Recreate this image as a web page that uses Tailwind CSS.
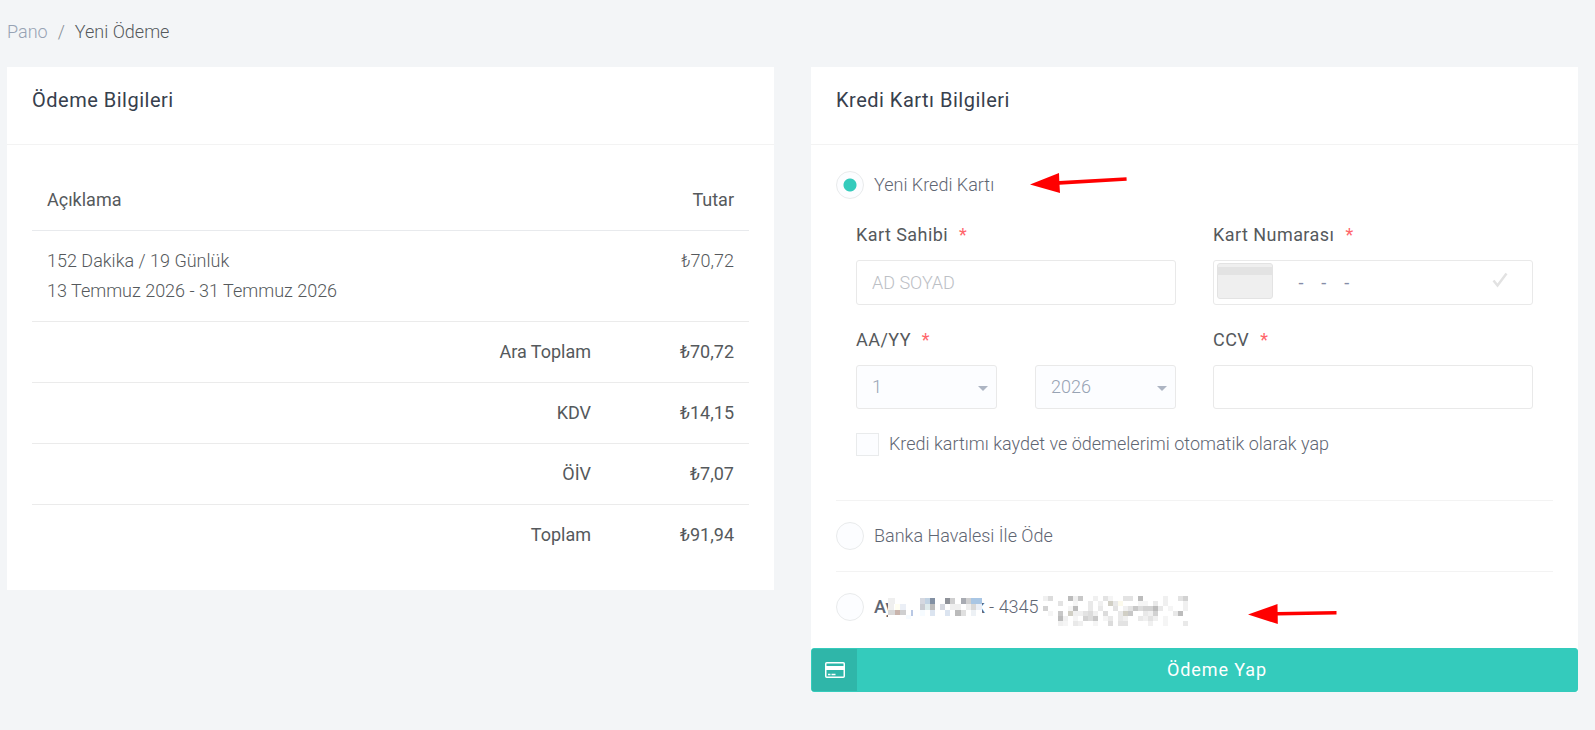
<!DOCTYPE html>
<html lang="tr">
<head>
<meta charset="utf-8">
<meta name="viewport" content="width=device-width, initial-scale=1">
<title>Yeni Ödeme</title>
<script src="https://cdn.jsdelivr.net/npm/@tailwindcss/browser@4"></script>
</head>
<body class="min-h-screen bg-[#f3f5f7] font-['Roboto',sans-serif] text-[18px] leading-[30px] font-light text-[#55595c]">
<nav aria-label="Konum" class="pt-[17px] pl-[7px]">
  <ol class="flex gap-2.5">
    <li><a href="#" class="text-[#97a3b4]">Pano</a></li>
    <li aria-hidden="true" class="text-[#868e96]">/</li>
    <li aria-current="page">Yeni Ödeme</li>
  </ol>
</nav>

<main class="grid grid-cols-2 items-start gap-[37px] pt-5 pr-[17px] pb-8 pl-[7px]">
  <section class="bg-white">
    <header class="border-b border-[#f3f3f3] px-[25px] pt-[18px] pb-[29px]">
      <h1 class="text-[20px] font-normal tracking-wide text-[#37404d]">Ödeme Bilgileri</h1>
    </header>
    <div class="p-[25px]">
      <table class="w-full border-collapse">
        <thead>
          <tr>
            <th colspan="2" class="p-[15px] text-left font-normal">Açıklama</th>
            <th class="p-[15px] text-right font-normal">Tutar</th>
          </tr>
        </thead>
        <tbody>
          <tr class="border-t border-[#e8eaed]">
            <td colspan="2" class="p-[15px]">152 Dakika / 19 Günlük<br>13 Temmuz 2026 - 31 Temmuz 2026</td>
            <td class="p-[15px] text-right align-top">₺70,72</td>
          </tr>
          <tr class="border-t border-[#ebebeb] text-right">
            <th colspan="2" class="p-[15px] font-normal">Ara Toplam</th>
            <td class="w-[143px] p-[15px] font-normal">₺70,72</td>
          </tr>
          <tr class="border-t border-[#ebebeb] text-right">
            <th colspan="2" class="p-[15px] font-normal">KDV</th>
            <td class="p-[15px] font-normal">₺14,15</td>
          </tr>
          <tr class="border-t border-[#ebebeb] text-right">
            <th colspan="2" class="p-[15px] font-normal">ÖİV</th>
            <td class="p-[15px] font-normal">₺7,07</td>
          </tr>
          <tr class="border-t border-[#ebebeb] text-right">
            <th colspan="2" class="p-[15px] font-normal">Toplam</th>
            <td class="p-[15px] font-normal">₺91,94</td>
          </tr>
        </tbody>
      </table>
    </div>
  </section>

  <form class="bg-white">
    <header class="border-b border-[#f3f3f3] px-[25px] pt-[18px] pb-[29px]">
      <h2 class="text-[20px] font-normal tracking-wide text-[#37404d]">Kredi Kartı Bilgileri</h2>
    </header>

    <div class="px-[25px] pt-[25px] pb-1.5">
      <div class="relative flex items-center text-[#5f6673]">
        <input id="pay-new" name="pay" type="radio" checked class="size-7 shrink-0 appearance-none rounded-full border border-[#e9ebec] bg-[#fcfdff] checked:bg-[radial-gradient(circle,#34cbbc_6px,#fcfdff_7px)]">
        <label for="pay-new" class="pl-2.5">Yeni Kredi Kartı</label>
        <svg aria-hidden="true" class="absolute top-0 left-[194px] h-6 w-[98px]" viewBox="0 0 98 24" fill="#f00"><path d="M0 14.5 29 3l.3 8L96.500 7.200l.2 3.500L29.500 14.700 30 23z"/></svg>
      </div>

      <div class="grid grid-cols-2 gap-x-[37px] gap-y-5 px-5 pt-5">
        <div>
          <label for="holder" class="mb-2.5 block font-normal tracking-wide">Kart Sahibi <span class="pl-1.5 text-[#ff666b]">*</span></label>
          <input id="holder" type="text" placeholder="AD SOYAD" class="block h-[45px] w-full rounded-[3px] border border-[#e9e9e9] bg-white px-[15px] placeholder:text-[#bcc0c5]">
        </div>
        <div>
          <label for="number" class="mb-2.5 block font-normal tracking-wide">Kart Numarası <span class="pl-1.5 text-[#ff666b]">*</span></label>
          <div class="flex h-[45px] items-center rounded-[3px] border border-[#e9e9e9] bg-white pr-6 pl-[3px]">
            <svg aria-hidden="true" class="-mt-1 h-9 w-14 shrink-0" viewBox="0 0 56 36"><rect x=".5" y=".5" width="55" height="35" rx="2.500" fill="#efefef" stroke="#e3e3e3"/><path d="M0 4h56v8H0z" fill="#e3e3e3"/></svg>
            <input id="number" type="text" inputmode="numeric" placeholder=" -    -    - " class="min-w-0 flex-1 bg-transparent pl-[21px] font-normal whitespace-pre placeholder:text-[#868ca8]">
            <svg aria-hidden="true" class="-mt-1.5 h-4 w-4 shrink-0" viewBox="0 0 16 16" fill="none" stroke="#e2e2e2" stroke-width="2.500"><path d="M1.500 8.500 5.500 13.500 14.500 1.500"/></svg>
          </div>
        </div>
        <fieldset>
          <legend class="mb-2.5 font-normal tracking-wide">AA/YY <span class="pl-1.5 text-[#ff666b]">*</span></legend>
          <div class="grid grid-cols-2 gap-[38px]">
            <div class="relative">
              <select aria-label="Ay" class="block h-11 w-full appearance-none rounded-[3px] border border-[#e9e9e9] bg-[#fcfdff] px-[15px] text-[#97a3b4]"><option>1</option></select>
              <svg aria-hidden="true" class="pointer-events-none absolute top-[21px] right-[9px] h-[5px] w-2.5" viewBox="0 0 10 5" fill="#adb5c3"><path d="M0 0h10L5 5z"/></svg>
            </div>
            <div class="relative">
              <select aria-label="Yıl" class="block h-11 w-full appearance-none rounded-[3px] border border-[#e9e9e9] bg-[#fcfdff] px-[15px] text-[#97a3b4]"><option>2026</option></select>
              <svg aria-hidden="true" class="pointer-events-none absolute top-[21px] right-[9px] h-[5px] w-2.5" viewBox="0 0 10 5" fill="#adb5c3"><path d="M0 0h10L5 5z"/></svg>
            </div>
          </div>
        </fieldset>
        <div>
          <label for="ccv" class="mb-2.5 block font-normal tracking-wide">CCV <span class="pl-1.5 text-[#ff666b]">*</span></label>
          <input id="ccv" type="text" inputmode="numeric" class="block h-11 w-full rounded-[3px] border border-[#e9e9e9] bg-white px-[15px]">
        </div>
        <div class="col-span-2 flex items-center text-[#5f6673]">
          <input id="save" type="checkbox" class="size-[23px] shrink-0 appearance-none border border-[#e9ebec] bg-[#fcfdff] checked:bg-[#34cbbc]">
          <label for="save" class="pl-2.5">Kredi kartımı kaydet ve ödemelerimi otomatik olarak yap</label>
        </div>
      </div>

      <div class="mt-[41px] flex h-[71px] items-center border-t border-[#f3f3f3] text-[#5f6673]">
        <input id="pay-bank" name="pay" type="radio" class="size-7 shrink-0 appearance-none rounded-full border border-[#e9ebec] bg-[#fcfdff] checked:bg-[radial-gradient(circle,#34cbbc_6px,#fcfdff_7px)]">
        <label for="pay-bank" class="pl-2.5">Banka Havalesi İle Öde</label>
      </div>

      <div class="relative flex h-[71px] items-center border-t border-[#f3f3f3] text-[#5f6673]">
        <input id="pay-saved" name="pay" type="radio" class="size-7 shrink-0 appearance-none rounded-full border border-[#e9ebec] bg-[#fcfdff] checked:bg-[radial-gradient(circle,#34cbbc_6px,#fcfdff_7px)]">
        <label for="pay-saved" class="flex items-center pl-2.5 whitespace-pre"><strong class="flex items-center font-medium">Ay<span class="-ml-1.5 flex items-center"><svg aria-hidden="true" class="z-10 h-6 w-[94px] shrink-0" viewBox="0 0 94 24" shape-rendering="crispEdges"><path fill="#fff" d="M0 0h94v24H0z"/>
          <path fill="#efefef" d="M0 3h7v6H0zM0 9h6v6H0zM62 9h11v6H62zM78 9h5v6h-5z"/><path fill="#d5d8e0" d="M32 3h5v6h-5zM52 9h5v6h-5z"/><path fill="#c2d3e3" d="M37 3h5v6h-5z"/><path fill="#8290a3" d="M42 3h5v6h-5z"/><path fill="#8f9299" d="M57 3h5v6h-5z"/><path fill="#cfcfd0" d="M62 3h5v6h-5zM78 3h5v6h-5zM12 15h6v5h-6z"/><path fill="#a8abb2" d="M73 3h5v6h-5z"/><path fill="#a9c6e4" d="M83 3h11v6H83z"/><path fill="#fffef2" d="M7 9h5v6H7z"/><path fill="#ebeff6" d="M12 9h6v6h-6zM88 9h6v6h-6z"/><path fill="#c9ccd2" d="M32 9h5v6h-5z"/><path fill="#dfebec" d="M37 9h5v6h-5z"/><path fill="#bbb" d="M42 9h5v6h-5zM67 15h6v6h-6z"/><path fill="#d8d8d8" d="M0 15h7v5H0zM83 9h5v6h-5z"/><path fill="#c9b4ac" d="M7 15h5v5H7z"/><path fill="#b9c8e4" d="M23 15h2v6h-2z"/><path fill="#f6fbff" d="M32 15h5v6h-5zM18 20h5v4h-5z"/><path fill="#dbe4f0" d="M42 15h5v6h-5zM57 15h5v6h-5z"/><path fill="#e0e0e0" d="M73 15h5v6h-5z"/><path fill="#edf1f5" d="M83 15h5v6h-5z"/></svg><span class="-ml-[7px]">k</span></span></strong><span> - 4345</span>
          <svg aria-hidden="true" class="mt-2 ml-1 h-[30px] w-[145px] shrink-0" viewBox="0 0 29 6" shape-rendering="crispEdges" fill="none" stroke-width="1"><path stroke="#bcbcbc" d="M5 .5h1M19 .5h1M6 2.500h1M22 2.500h1M3 4.500h1M27 3.500h1"/><path stroke="#c8c8c8" d="M7 .5h1M3 3.500h1M17 3.500h1M10 4.500h1M18 2.500h1"/><path stroke="#d2d2d2" d="M28 .5h1M0 2.500h1M20 2.500h2M8 4.500h1M22 3.500h1"/><path stroke="#d1cfc5" d="M13 1.500h1M5 3.500h1M16 3.500h1"/><path stroke="#dcdcdc" d="M1 .5h1M19 2.500h1M9 3.500h1M12 3.500h1M9 4.500h1M13 5.500h1"/><path stroke="#e3e3e3" d="M12 .5h1M16 .5h2M27 .5h1M3 1.500h1M14 2.500h1M17 2.500h1M8 3.500h1M21 4.500h1M15 5.500h2"/><path stroke="#e9e9e9" d="M9 1.500h1M22 1.500h1M9 2.500h1M11 2.500h1M23 2.500h1M15 3.500h1M20 3.500h1M26 3.500h1M15 4.500h1M19 4.500h1M13 4.500h1M6 5.500h1M28 5.500h1M14 1.500h1"/><path stroke="#f0f0f0" d="M0 .5h1M6 .5h1M10 .5h1M24 .5h1M11 1.500h1M24 1.500h1M28 1.500h1M16 2.500h1M28 2.500h1M6 3.500h2M10 3.500h1M21 3.500h1M4 4.500h1M16 4.500h1M20 4.500h1M22 4.500h1M3 5.500h1M7 5.500h1M21 5.500h1"/><path stroke="#f5f5f5" d="M13 .5h1M6 1.500h1M19 1.500h2M5 2.500h1M25 2.500h1M1 3.500h1M6 4.500h1M12 4.500h1M24 4.500h1M4 5.500h1M10 5.500h1M24 5.500h1"/><path stroke="#fcfaec" d="M15 1.500h1"/></svg></label>
        <svg aria-hidden="true" class="absolute top-8 left-[412px] h-5 w-[90px]" viewBox="0 0 90 20" fill="#f00"><path d="M0 10.500 29.500 0l.1 8L88.500 7v3.500L29.700 11.500l.1 8.500z"/></svg>
      </div>
    </div>

    <button type="submit" class="flex h-11 w-full items-stretch rounded-[3px] border border-[#34cbbc] bg-[#34cbbc] font-normal tracking-wider text-white">
      <span class="flex w-[45px] items-center justify-center bg-[#2fb6a9]">
        <svg aria-hidden="true" class="h-4 w-5" viewBox="0 0 20 16" fill="none" stroke="#fff"><rect x=".75" y=".75" width="18.500" height="14.500" rx="1" stroke-width="1.500"/><path d="M0 6h20" stroke-width="4"/><path d="M3 12.500h2.500M6.500 12.500h4" stroke-width="1.500"/></svg>
      </span>
      <span class="flex flex-1 items-center justify-center">Ödeme Yap</span>
    </button>
  </form>
</main>
</body>
</html>
